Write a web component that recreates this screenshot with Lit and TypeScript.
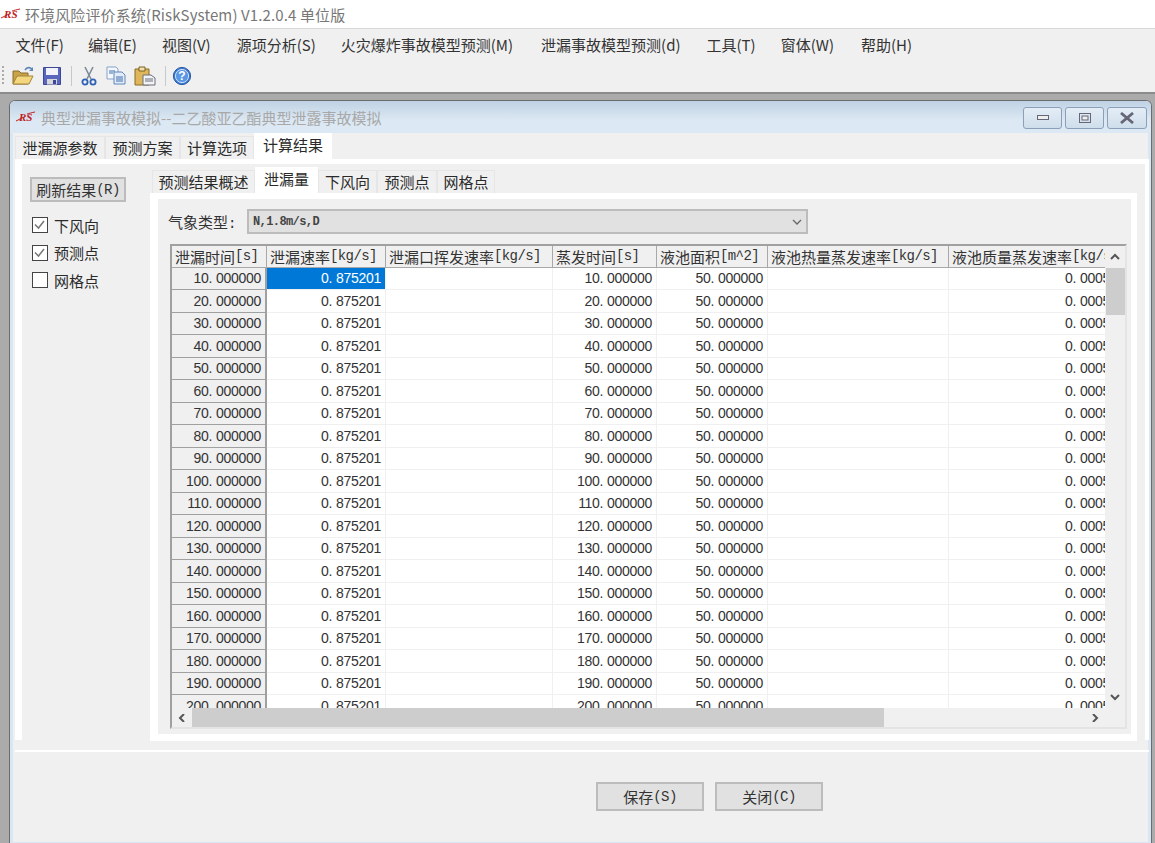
import { LitElement, html, css, svg } from 'lit';
import { customElement } from 'lit/decorators.js';
import { classMap } from 'lit/directives/class-map.js';

const MENU = ['文件(F)', '编辑(E)', '视图(V)', '源项分析(S)', '火灾爆炸事故模型预测(M)', '泄漏事故模型预测(d)', '工具(T)', '窗体(W)', '帮助(H)'];
const MAIN_TABS = ['泄漏源参数', '预测方案', '计算选项', '计算结果'];
const SUB_TABS = ['预测结果概述', '泄漏量', '下风向', '预测点', '网格点'];
const COLUMNS = ['泄漏时间[s]', '泄漏速率[kg/s]', '泄漏口挥发速率[kg/s]', '蒸发时间[s]', '液池面积[m^2]', '液池热量蒸发速率[kg/s]', '液池质量蒸发速率[kg/s]'];
const ROWS = Array.from({ length: 20 }, (_, i) => `${(i + 1) * 10}.000000`);

// latin runs in the SimSun-looking text get a narrowed mono face
const mixed = (text: string) =>
  text.split(/([\x20-\x7e]+)/).filter(Boolean).map((part) =>
    /^[\x20-\x7e]+$/.test(part) ? html`<span class="lat">${part}</span>` : part
  );

// grid numbers: the dot takes a full digit width, as in the reference
const num = (value: string) => {
  const [whole, frac] = value.split('.');
  return html`<span class="num">${whole}<span class="dot">.</span>${frac}</span>`;
};

const logo = (color: string) => svg`<svg class="logo" width="19" height="12" viewBox="0 0 19 12">
  <path d="M0 10 C2 9 4 8 6 7 M11 3 C13 2.4 16 1.6 19 1" stroke=${color} stroke-width="1" fill="none"/>
  <text x="3" y="10" font-family="Liberation Serif" font-style="italic" font-weight="700" font-size="11" fill=${color}>RS</text>
</svg>`;

const ICONS = {
  open: svg`<svg width="22" height="20" viewBox="0 0 22 20">
    <path d="M1 5h6l2 2h7v11H1z" fill="#c9a24a" stroke="#8a6d28"/>
    <path d="M1 18l4-8h16l-4 8z" fill="#f3d67e" stroke="#a38436"/>
    <path d="M13 4c2-3 5-3 7-1" stroke="#5f86b8" stroke-width="1.6" fill="none"/>
    <path d="M21 1v4h-4z" fill="#5f86b8"/>
  </svg>`,
  save: svg`<svg width="20" height="20" viewBox="0 0 20 20">
    <path d="M1.5 1.5h17v17h-17z" fill="#5a66bd" stroke="#3d4798"/>
    <path d="M4 2h12v7H4z" fill="#f2f3fa"/>
    <path d="M5 13h10v5.5H5z" fill="#d8d8d8"/>
    <path d="M11 14h3v4h-3z" fill="#3d4798"/>
  </svg>`,
  cut: svg`<svg width="16" height="20" viewBox="0 0 16 20">
    <path d="M4 1l6 12M12 1L6 13" stroke="#7d8a98" stroke-width="1.6" fill="none"/>
    <circle cx="4" cy="16" r="2.6" fill="none" stroke="#2f62b5" stroke-width="1.8"/>
    <circle cx="12" cy="16" r="2.6" fill="none" stroke="#2f62b5" stroke-width="1.8"/>
  </svg>`,
  copy: svg`<svg width="20" height="20" viewBox="0 0 20 20">
    <path d="M1 1h9l2 2v10H1z" fill="#f4f8fd" stroke="#86a3c8"/>
    <path d="M8 6h8l3 3v9H8z" fill="#e2edf9" stroke="#5f86b8"/>
    <path d="M10 11h7M10 13h7M10 15h7M3 5h6M3 7h4" stroke="#3f6eaa"/>
  </svg>`,
  paste: svg`<svg width="22" height="20" viewBox="0 0 22 20">
    <path d="M1 3h14v16H1z" fill="#dfb75a" stroke="#8a6d28"/>
    <path d="M5 1h6v4H5z" fill="#f1e2ad" stroke="#7a6022"/>
    <path d="M9 9h8l4 3v7H9z" fill="#f1f3f6" stroke="#6b6f78"/>
    <path d="M11 13h8M11 15h8" stroke="#6b6f78"/>
  </svg>`,
  help: svg`<svg width="20" height="20" viewBox="0 0 20 20">
    <circle cx="10" cy="10" r="8.6" fill="#3b78cf" stroke="#2a5aa5"/>
    <circle cx="10" cy="10" r="6.6" fill="#5a97e4" stroke="#cfe0f7"/>
    <text x="10" y="14.4" text-anchor="middle" font-family="Liberation Sans" font-weight="700" font-size="12" fill="#fff">?</text>
  </svg>`,
};

const chevron = (d: string, color = '#555', w = 2) =>
  svg`<svg width="10" height="8" viewBox="0 0 10 8"><path d=${d} fill="none" stroke=${color} stroke-width=${w}/></svg>`;

@customElement('app-root')
class AppRoot extends LitElement {
  static styles = css`
    :host {
      display: flex;
      flex-direction: column;
      width: 1155px;
      height: 843px;
      overflow: hidden;
      background: #f0f0f0;
      color: #2a2a2a;
      font-family: 'Noto Sans CJK SC', 'Liberation Sans', sans-serif;
      font-size: 15px;
    }
    .lat {
      font-family: 'Liberation Mono', monospace;
      font-size: 14px;
      letter-spacing: -0.6px;
    }
    .num {
      font-family: 'Liberation Sans', sans-serif;
      font-size: 14px;
      letter-spacing: -0.3px;
      color: #333;
    }
    .dot {
      letter-spacing: 3.6px;
    }
    .app-title {
      display: flex;
      align-items: center;
      gap: 5px;
      height: 29px;
      flex: none;
      box-sizing: border-box;
      padding-left: 1px;
      background: #fff;
      border-bottom: 1px solid #d9d9d9;
      color: #777;
      letter-spacing: 0.12px;
    }
    .menu {
      display: flex;
      height: 31px;
      flex: none;
      align-items: center;
      padding-left: 3px;
      color: #333;
    }
    .menu span {
      padding: 0 12.5px;
      white-space: nowrap;
    }
    .menu span:nth-child(1) {
      padding-right: 11.5px;
    }
    .menu span:nth-child(3),
    .menu span:nth-child(6) {
      padding-right: 13.5px;
    }
    .menu span:nth-child(5) {
      padding-right: 15.5px;
    }
    .menu span:nth-child(8) {
      padding-right: 14.5px;
    }
    .toolbar {
      display: flex;
      align-items: center;
      height: 32px;
      flex: none;
      padding-left: 2px;
    }
    .toolbar svg {
      display: block;
      flex: none;
    }
    .grip {
      width: 2px;
      height: 20px;
      margin-right: 8px;
      background: repeating-linear-gradient(#aaa 0 2px, transparent 2px 4px);
    }
    .tool {
      margin-right: 8px;
    }
    .tool.cut {
      margin-right: 9px;
    }
    .tool.help {
      margin-left: -3px;
    }
    .sep {
      width: 1px;
      height: 20px;
      background: #c8c8c8;
      margin: 0 9px 0 1px;
    }
    .mdi {
      flex: 1;
      min-height: 0;
      display: flex;
      background: #ababab;
      border-top: 2px solid #8c8c8c;
      padding: 6px 3px 0 9px;
    }
    .window {
      flex: 1;
      min-width: 0;
      display: flex;
      flex-direction: column;
      background: #f0f0f0;
      border: 1px solid #6c6c6c;
      border-bottom: none;
      border-radius: 6px 6px 0 0;
      box-shadow: inset 3px 0 0 #d9e6f3, inset -3px 0 0 #d9e6f3, inset 0 -1px 0 #d9e6f3;
    }
    .win-title {
      display: flex;
      align-items: center;
      height: 32px;
      flex: none;
      padding: 0 4px 0 6px;
      border-radius: 5px 5px 0 0;
      background: linear-gradient(#bfd2e4, #dce8f3 60%);
      color: #a8a8a8;
    }
    .win-title .caption {
      flex: 1;
      margin-left: 6px;
    }
    .ctl {
      display: flex;
      align-items: center;
      justify-content: center;
      width: 39px;
      height: 22px;
      box-sizing: border-box;
      margin: 2px 0 0 3px;
      border: 1px solid #8ba0b8;
      border-radius: 3px;
      background: linear-gradient(#e4edf6, #cfdeec);
    }
    .ctl:last-child {
      width: 40px;
    }
    .tabs {
      display: flex;
      align-items: flex-end;
      flex: none;
    }
    .tab {
      display: flex;
      align-items: center;
      justify-content: center;
      box-sizing: border-box;
      height: 23px;
      padding-bottom: 2px;
      background: #f0f0f0;
      border: 1px solid #e6e6e6;
      border-bottom: none;
      white-space: nowrap;
    }
    .tab.active {
      height: 27px;
      padding-bottom: 5px;
      background: #fff;
      border: none;
      position: relative;
      top: 1px;
    }
    .main-tabs {
      height: 26px;
      padding-left: 5px;
    }
    .sub-tabs {
      height: 26px;
      padding-left: 2px;
    }
    .body {
      margin: 0 2px 0 5px;
      border-bottom: 2px solid #fff;
      flex: none;
    }
    .page {
      height: 576px;
      display: flex;
      border: solid #fff;
      border-width: 5px 4px 0 7px;
    }
    .page-foot {
      height: 10px;
      margin-left: 3px;
    }
    .side {
      width: 128px;
      flex: none;
      box-sizing: border-box;
      padding: 13px 0 0 8px;
    }
    .btn {
      display: flex;
      align-items: center;
      justify-content: center;
      box-sizing: border-box;
      background: #e1e1e1;
      border: 2px solid #bcbcbc;
      color: #333;
    }
    .refresh {
      width: 96px;
      height: 25px;
      margin-bottom: 9.5px;
    }
    .check {
      display: flex;
      align-items: center;
      gap: 6px;
      height: 27.5px;
      padding-left: 2px;
    }
    .box {
      display: flex;
      width: 16px;
      height: 16px;
      box-sizing: border-box;
      background: #fff;
      border: 1.5px solid #444;
    }
    .content {
      flex: 1;
      min-width: 0;
      display: flex;
      flex-direction: column;
      margin-right: 8px;
      margin-top: 3px;
    }
    .panel {
      flex: 1;
      min-height: 0;
      background: #f0f0f0;
      border: solid #fff;
      border-width: 6px 6px 7px 8px;
      margin-bottom: -1px;
    }
    .weather {
      display: flex;
      align-items: center;
      height: 25px;
      margin: 10px 0 10px 10px;
    }
    .weather label {
      width: 79px;
      color: #333;
    }
    .combo {
      width: 561px;
      height: 25px;
      justify-content: space-between;
      padding: 0 4px 0 4px;
      font-family: 'Liberation Mono', monospace;
      font-size: 12px;
      font-weight: 700;
      letter-spacing: -0.6px;
      color: #444;
    }
    .table {
      display: grid;
      grid-template-columns: 1fr 20px;
      grid-template-rows: 1fr 19px;
      width: 957px;
      height: 485px;
      box-sizing: border-box;
      margin-left: 12px;
      border: 2px solid #a0a0a0;
      border-right-color: #e4e4e4;
      border-bottom-color: #e4e4e4;
    }
    .grid {
      overflow: hidden;
      background: #fff;
      min-width: 0;
    }
    .row {
      display: grid;
      grid-template-columns: 95px 119px 167px 104px 111px 181px 157px;
      height: 22.5px;
    }
    .row.head {
      height: 20.5px;
      background: #f0f0f0;
      border-bottom: 1px solid #a8a8a8;
    }
    .cell {
      box-sizing: border-box;
      display: flex;
      align-items: center;
      justify-content: flex-end;
      padding-right: 4px;
      overflow: hidden;
      white-space: nowrap;
      border-right: 1px solid #f0f0f0;
      border-bottom: 1px solid #f0f0f0;
    }
    .head .cell {
      justify-content: flex-start;
      padding: 0 0 0 3px;
      border-right: 1px solid #a8a8a8;
      border-bottom: none;
      color: #333;
    }
    .cell.rowhead {
      background: #f0f0f0;
      border-right: 2px solid #a0a0a0;
      border-bottom: 1.5px solid #a0a0a0;
    }
    .cell.selected {
      background: #0078d7;
    }
    .cell.selected .num {
      color: #fff;
    }
    .cell.clip {
      justify-content: flex-start;
      padding: 0 0 0 116px;
      border-right: none;
    }
    .vbar, .hbar {
      display: flex;
      background: #f0f0f0;
    }
    .vbar {
      flex-direction: column;
      align-items: center;
    }
    .arrow {
      display: flex;
      align-items: center;
      justify-content: center;
      flex: none;
    }
    .vbar .arrow {
      width: 20px;
      height: 22px;
    }
    .vthumb {
      width: 19px;
      height: 47px;
      background: #cdcdcd;
    }
    .hbar {
      align-items: stretch;
    }
    .hbar .arrow {
      width: 20px;
    }
    .hthumb {
      width: 692px;
      background: #cdcdcd;
    }
    .gap {
      flex: 1;
    }
    .corner {
      background: #f0f0f0;
    }
    .footer {
      flex: 1;
      display: flex;
      gap: 11px;
      padding: 30px 0 0 586px;
    }
    .footer .btn {
      width: 108px;
      height: 29px;
    }
  `;

  protected render() {
    return html`
      <div class="app-title">${logo('#c02020')}<span>环境风险评价系统(RiskSystem) V1.2.0.4 单位版</span></div>
      <div class="menu">${MENU.map((m) => html`<span>${m}</span>`)}</div>
      ${this._renderToolbar()}
      <div class="mdi">
        <div class="window">
          <div class="win-title">
            ${logo('#c02020')}
            <span class="caption">典型泄漏事故模拟--二乙酸亚乙酯典型泄露事故模拟</span>
            <div class="ctl">${svg`<svg width="12" height="6"><rect x="0.5" y="0.5" width="11" height="4" fill="#eee" stroke="#667"/></svg>`}</div>
            <div class="ctl">${svg`<svg width="12" height="10"><rect x="0.5" y="0.5" width="11" height="9" fill="none" stroke="#667"/><rect x="3" y="3" width="6" height="4" fill="#eee" stroke="#667"/></svg>`}</div>
            <div class="ctl">${svg`<svg width="16" height="12"><path d="M2 1l12 10M14 1L2 11" stroke="#667" stroke-width="2.8"/></svg>`}</div>
          </div>
          <div class="tabs main-tabs">
            ${this._renderTabs(MAIN_TABS, [90, 75, 74, 78], 3)}
          </div>
          <div class="body">
            <div class="page">
              <div class="side">
                <div class="btn refresh">${mixed('刷新结果(R)')}</div>
                ${this._renderCheck('下风向', true)}
                ${this._renderCheck('预测点', true)}
                ${this._renderCheck('网格点', false)}
              </div>
              <div class="content">
                <div class="tabs sub-tabs">
                  ${this._renderTabs(SUB_TABS, [103, 63, 59, 60, 58], 1)}
                </div>
                <div class="panel">
                  <div class="weather">
                    <label>${mixed('气象类型:')}</label>
                    <div class="btn combo">
                      <span>N,1.8m/s,D</span>
                      ${chevron('M1 2l4 4 4-4', '#666', 1.3)}
                    </div>
                  </div>
                  ${this._renderTable()}
                </div>
              </div>
            </div>
            <div class="page-foot"></div>
          </div>
          <div class="footer">
            <div class="btn">${mixed('保存(S)')}</div>
            <div class="btn">${mixed('关闭(C)')}</div>
          </div>
        </div>
      </div>
    `;
  }

  private _renderToolbar() {
    return html`<div class="toolbar">
      <div class="grip"></div>
      <div class="tool">${ICONS.open}</div>
      <div class="tool">${ICONS.save}</div>
      <div class="sep"></div>
      <div class="tool cut">${ICONS.cut}</div>
      <div class="tool">${ICONS.copy}</div>
      <div class="tool">${ICONS.paste}</div>
      <div class="sep"></div>
      <div class="tool help">${ICONS.help}</div>
    </div>`;
  }

  private _renderTabs(labels: string[], widths: number[], active: number) {
    return labels.map(
      (label, i) => html`<div class=${classMap({ tab: true, active: i === active })} style="width:${widths[i]}px">${label}</div>`
    );
  }

  private _renderCheck(label: string, checked: boolean) {
    return html`<div class="check">
      <span class="box">
        ${checked ? svg`<svg width="13" height="13" viewBox="0 0 13 13"><path d="M2 6.5l3.5 3.5L11 3" fill="none" stroke="#777" stroke-width="1.5"/></svg>` : ''}
      </span>
      <span>${label}</span>
    </div>`;
  }

  private _renderTable() {
    return html`<div class="table">
      <div class="grid">
        <div class="row head">
          ${COLUMNS.map((c) => html`<div class="cell">${mixed(c)}</div>`)}
        </div>
        ${ROWS.map(
          (r) => html`<div class="row">
            <div class="cell rowhead">${num(r)}</div>
            <div class=${classMap({ cell: true, selected: r === ROWS[0] })}>${num('0.875201')}</div>
            <div class="cell"></div>
            <div class="cell">${num(r)}</div>
            <div class="cell">${num('50.000000')}</div>
            <div class="cell"></div>
            <div class="cell clip">${num('0.000501')}</div>
          </div>`
        )}
      </div>
      <div class="vbar">
        <div class="arrow">${chevron('M1 6l4-4 4 4')}</div>
        <div class="vthumb"></div>
        <div class="gap"></div>
        <div class="arrow">${chevron('M1 2l4 4 4-4')}</div>
      </div>
      <div class="hbar">
        <div class="arrow">${chevron('M7 0l-4 4 4 4')}</div>
        <div class="hthumb"></div>
        <div class="gap"></div>
        <div class="arrow">${chevron('M3 0l4 4-4 4')}</div>
      </div>
      <div class="corner"></div>
    </div>`;
  }
}
